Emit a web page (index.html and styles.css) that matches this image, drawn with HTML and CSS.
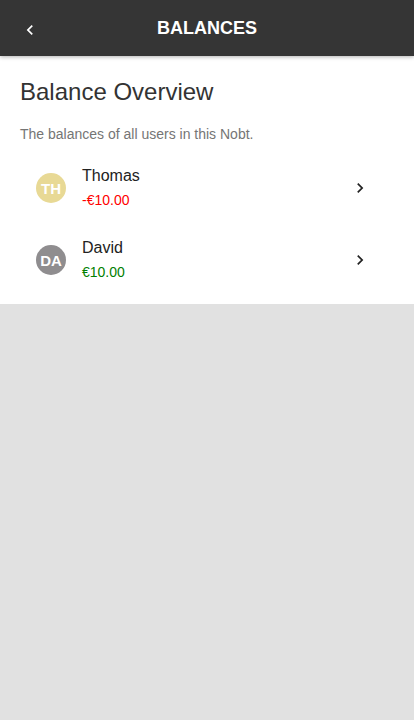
FILE: index.html
```html
<!DOCTYPE html>
<html>
<head>
<meta charset="utf-8">
<link rel="stylesheet" href="styles.css">
</head>
<body>
<header class="appbar">
  <button class="back" aria-label="Back">
    <svg width="20" height="20" viewBox="0 0 24 24"><path d="M15.41 7.41L14 6l-6 6 6 6 1.41-1.41L10.83 12z" fill="#fff"/></svg>
  </button>
  <h1 class="appbar-title">BALANCES</h1>
</header>
<main class="content">
  <h2 class="title">Balance Overview</h2>
  <p class="subtitle">The balances of all users in this Nobt.</p>
  <ul class="list">
    <li class="item">
      <span class="avatar avatar-th">TH</span>
      <div class="text">
        <span class="name">Thomas</span>
        <span class="amount negative">-€10.00</span>
      </div>
      <svg class="chevron" width="20" height="20" viewBox="0 0 24 24"><path d="M10 6L8.59 7.41 13.17 12l-4.58 4.59L10 18l6-6z" fill="#222"/></svg>
    </li>
    <li class="item">
      <span class="avatar avatar-da">DA</span>
      <div class="text">
        <span class="name">David</span>
        <span class="amount positive">€10.00</span>
      </div>
      <svg class="chevron" width="20" height="20" viewBox="0 0 24 24"><path d="M10 6L8.59 7.41 13.17 12l-4.58 4.59L10 18l6-6z" fill="#222"/></svg>
    </li>
  </ul>
</main>
</body>
</html>
```
FILE: styles.css
```css
* { box-sizing: border-box; }
html, body { margin: 0; padding: 0; }
body {
  background: #e1e1e1;
  font-family: Roboto, "Liberation Sans", Arial, sans-serif;
  min-height: 720px;
}
.appbar {
  height: 56px;
  background: #353535;
  display: flex;
  align-items: center;
  position: relative;
  box-shadow: 0 1px 4px rgba(0,0,0,0.3);
  z-index: 1;
}
.back {
  background: none;
  border: 0;
  padding: 0;
  margin: 4px 0 0 20px;
  width: 20px;
  height: 20px;
  display: flex;
}
.appbar-title {
  position: absolute;
  left: 0;
  right: 0;
  text-align: center;
  margin: 0;
  color: #fff;
  font-family: "Liberation Sans", Arial, sans-serif;
  font-size: 18px;
  font-weight: bold;
  pointer-events: none;
}
.content {
  background: #fff;
  padding: 20px 20px 8px;
}
.title {
  margin: 0;
  font-family: "Liberation Sans", Arial, sans-serif;
  font-weight: normal;
  font-size: 24px;
  color: #333;
  line-height: 32px;
}
.subtitle {
  margin: 17px 0 0;
  font-family: "Liberation Sans", Arial, sans-serif;
  font-size: 14px;
  color: #757575;
  line-height: 18px;
}
.list {
  list-style: none;
  margin: 9px 0 0;
  padding: 0;
}
.item {
  height: 72px;
  display: flex;
  align-items: center;
  padding: 0 16px;
}
.avatar {
  width: 30px;
  height: 30px;
  border-radius: 50%;
  color: #fff;
  font-family: "Liberation Sans", Arial, sans-serif;
  font-weight: bold;
  font-size: 15px;
  display: flex;
  align-items: center;
  justify-content: center;
  flex: none;
}
.avatar-th { background: #e8d995; }
.avatar-da { background: #8f8d8f; }
.text {
  flex: 1;
  margin-left: 16px;
  display: flex;
  flex-direction: column;
  font-family: "Liberation Sans", Arial, sans-serif;
}
.name {
  font-size: 16px;
  color: #222;
  line-height: 20px;
  margin-top: -2px;
}
.amount {
  font-size: 14px;
  line-height: 18px;
  margin-top: 5px;
}
.negative { color: #ff0000; }
.positive { color: #008000; }
.chevron { flex: none; margin-right: 8px; }
```
